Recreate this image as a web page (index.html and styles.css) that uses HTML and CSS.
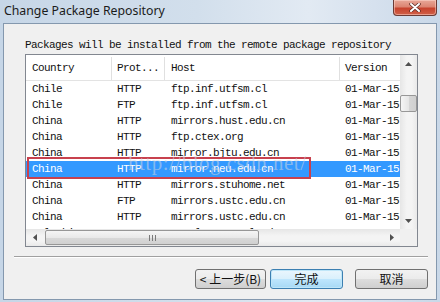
FILE: index.html
```html
<!DOCTYPE html>
<html lang="en">

<head>
    <meta charset="UTF-8">
    <meta name="viewport" content="width=device-width, initial-scale=1.0">
    <title>Change Package Repository</title>
    <link rel="stylesheet" href="styles.css">
</head>

<body>
    <div class="window">
        <div class="titlebar">
            <span class="title">Change Package Repository</span>
            <button type="button" class="close">
                <svg width="12" height="9" viewBox="0 0 12 9">
                    <path d="M2 1 L10 8 M10 1 L2 8" stroke="#5a2a22" stroke-width="3.4" stroke-linecap="round" />
                    <path d="M2 1 L10 8 M10 1 L2 8" stroke="#ffffff" stroke-width="2" stroke-linecap="round" />
                </svg>
            </button>
        </div>

        <div class="client">
            <p class="intro">Packages will be installed from the remote package repository</p>

            <div class="listview">
                <div class="list-main">
                    <div class="list-body">
                        <div class="row header">
                            <span>Country</span><span>Prot...</span><span>Host</span><span>Version</span>
                        </div>
                        <div class="row"><span>Chile</span><span>HTTP</span><span>ftp.inf.utfsm.cl</span><span>01-Mar-15</span></div>
                        <div class="row"><span>Chile</span><span>FTP</span><span>ftp.inf.utfsm.cl</span><span>01-Mar-15</span></div>
                        <div class="row"><span>China</span><span>HTTP</span><span>mirrors.hust.edu.cn</span><span>01-Mar-15</span></div>
                        <div class="row"><span>China</span><span>HTTP</span><span>ftp.ctex.org</span><span>01-Mar-15</span></div>
                        <div class="row"><span>China</span><span>HTTP</span><span>mirror.bjtu.edu.cn</span><span>01-Mar-15</span></div>
                        <div class="row selected"><span>China</span><span>HTTP</span><span>mirror.neu.edu.cn</span><span>01-Mar-15</span></div>
                        <div class="row"><span>China</span><span>HTTP</span><span>mirrors.stuhome.net</span><span>01-Mar-15</span></div>
                        <div class="row"><span>China</span><span>FTP</span><span>mirrors.ustc.edu.cn</span><span>01-Mar-15</span></div>
                        <div class="row"><span>China</span><span>HTTP</span><span>mirrors.ustc.edu.cn</span><span>01-Mar-15</span></div>
                        <div class="row"><span>Colombia</span><span>HTTP</span><span>www.laqee.unal.edu.co</span><span>01-Mar-15</span></div>

                        <div class="mark"></div>
                        <div class="watermark">http://blog.csdn.net/</div>
                    </div>

                    <div class="vscroll">
                        <div class="arrow">
                            <svg width="7" height="4" viewBox="0 0 7 4"><polygon points="3.5,0 7,4 0,4" /></svg>
                        </div>
                        <div class="vthumb"></div>
                        <div class="arrow">
                            <svg width="7" height="4" viewBox="0 0 7 4"><polygon points="0,0 7,0 3.5,4" /></svg>
                        </div>
                    </div>
                </div>

                <div class="list-foot">
                    <div class="hscroll">
                        <div class="arrow">
                            <svg width="4" height="7" viewBox="0 0 4 7"><polygon points="0,3.5 4,0 4,7" /></svg>
                        </div>
                        <div class="hthumb">
                            <svg width="7" height="6" viewBox="0 0 7 6">
                                <path d="M0.5 0 V6 M3.5 0 V6 M6.5 0 V6" stroke="#7a7a7a" stroke-width="1" />
                            </svg>
                        </div>
                        <div class="arrow right">
                            <svg width="4" height="7" viewBox="0 0 4 7"><polygon points="0,0 4,3.5 0,7" /></svg>
                        </div>
                    </div>
                    <div class="corner"></div>
                </div>
            </div>

            <div class="separator"></div>

            <div class="buttons">
                <button type="button" class="btn">&lt; 上一步(B)</button>
                <button type="button" class="btn default">完成</button>
                <button type="button" class="btn cancel">取消</button>
            </div>
        </div>
    </div>
</body>

</html>
```

FILE: styles.css
```css
body {
    margin: 0;
}

.window {
    width: 440px;
    height: 302px;
    box-sizing: border-box;
    padding: 0 3px 2px 3px;
    display: flex;
    flex-direction: column;
    background: linear-gradient(to right, #c6d6e7 0%, #d2dfec 45%, #e2eaf3 70%, #d6e1ee 85%, #c9d8e8 100%);
    overflow: hidden;
}

.titlebar {
    height: 23px;
    display: flex;
    align-items: flex-start;
    justify-content: space-between;
}

.title {
    font-family: "Noto Sans", sans-serif;
    font-size: 12.3px;
    line-height: 21px;
    color: #1b1b1b;
    padding-left: 1px;
}

.titlebar .close {
    width: 44px;
    height: 16px;
    padding: 0;
    display: flex;
    align-items: center;
    justify-content: center;
    border: 1px solid #6b3b35;
    border-top: none;
    border-radius: 0 0 4px 4px;
    background: linear-gradient(#e8a898 0%, #dc8572 45%, #c7432d 55%, #d06048 100%);
    box-shadow: inset 0 0 0 1px rgba(255, 220, 210, 0.5);
}

.client {
    flex: 1;
    display: flex;
    flex-direction: column;
    background: #f0f0f0;
    border: 1px solid #8498ae;
}

.intro {
    margin: 15px 0 3px 21px;
    font-family: "Liberation Mono", monospace;
    font-size: 11px;
    letter-spacing: -0.6px;
    line-height: 12px;
    color: #111;
    white-space: nowrap;
}

.listview {
    margin-left: 21px;
    width: 393px;
    height: 193px;
    box-sizing: border-box;
    border: 1px solid #828790;
    background: #fff;
    display: flex;
    flex-direction: column;
}

.list-main {
    display: flex;
    height: 174px;
}

.list-body {
    position: relative;
    width: 374px;
    overflow: hidden;
    font-family: "Liberation Mono", monospace;
    font-size: 11px;
    letter-spacing: -0.6px;
    color: #111;
}

.row {
    display: grid;
    grid-template-columns: 86px 53px 175px 90px;
    height: 16px;
    line-height: 16px;
    white-space: nowrap;
}

.row span {
    padding-left: 6px;
    overflow: hidden;
}

.row span:nth-child(2),
.row span:nth-child(4) {
    padding-left: 5px;
}

.row.header {
    height: 24px;
    line-height: 24px;
    padding-top: 1px;
    box-sizing: content-box;
    border-bottom: 1px solid #e3e3e3;
}

.row.header span {
    border-right: 1px solid #e0e0e0;
    margin-top: 1px;
    line-height: 22px;
}

.row.header span:last-child {
    border-right: none;
}

.row.selected {
    background: #3399ff;
    color: #fff;
}

.mark {
    position: absolute;
    left: 1px;
    top: 102px;
    width: 284px;
    height: 22px;
    box-sizing: border-box;
    border: 2px solid #c8414e;
}

.watermark {
    position: absolute;
    left: 102px;
    top: 96px;
    font-family: "Liberation Serif", serif;
    font-size: 21px;
    letter-spacing: 0.5px;
    color: rgba(205, 212, 225, 0.55);
    white-space: nowrap;
}

.vscroll {
    width: 17px;
    display: flex;
    flex-direction: column;
    justify-content: space-between;
    background: linear-gradient(to right, #e6e6e6, #f4f4f4 40%, #f4f4f4 70%, #e9e9e9);
}

.arrow {
    width: 17px;
    height: 17px;
    display: flex;
    align-items: center;
    justify-content: center;
}

.arrow svg {
    fill: #505050;
}

.vscroll .vthumb {
    margin-top: 23px;
    margin-bottom: auto;
    width: 15px;
    height: 15px;
    border: 1px solid #979797;
    border-radius: 2px;
    background: linear-gradient(to right, #f5f5f5, #e6e6e6 50%, #d6d6d6 51%, #d0d0d0);
}

.list-foot {
    display: flex;
    height: 17px;
}

.hscroll {
    width: 374px;
    display: flex;
    align-items: center;
    background: linear-gradient(#e6e6e6, #f4f4f4 40%, #f4f4f4 70%, #e9e9e9);
}

.hscroll .hthumb {
    margin-left: 2px;
    width: 212px;
    height: 13px;
    border: 1px solid #979797;
    border-radius: 2px;
    background: linear-gradient(#f5f5f5, #e9e9e9 50%, #d9d9d9 51%, #d0d0d0);
    display: flex;
    align-items: center;
    justify-content: center;
}

.hscroll .arrow.right {
    margin-left: auto;
}

.corner {
    width: 17px;
    background: #f0f0f0;
}

.separator {
    margin: 9px 8px 0 10px;
    border-top: 1px solid #a0a0a0;
    border-bottom: 1px solid #ffffff;
}

.buttons {
    display: flex;
    justify-content: flex-end;
    gap: 4px;
    margin-top: 11px;
    padding-right: 8px;
}

.btn {
    width: 71px;
    height: 20px;
    padding: 0;
    border: 1px solid #707070;
    border-radius: 3px;
    background: linear-gradient(#f2f2f2 0%, #ebebeb 50%, #dddddd 51%, #cfcfcf 100%);
    font-family: "Noto Sans CJK SC", sans-serif;
    font-size: 12px;
    line-height: 16px;
    color: #111;
    white-space: nowrap;
}

.btn.default {
    width: 73px;
    border-color: #3c7fb1;
    box-shadow: inset 0 0 0 1px #bfe6f8;
    background: linear-gradient(#eaf6fd 0%, #d9f0fc 50%, #bee6fd 51%, #a7d9f5 100%);
}

.btn.cancel {
    width: 73px;
    margin-left: 8px;
}
```
